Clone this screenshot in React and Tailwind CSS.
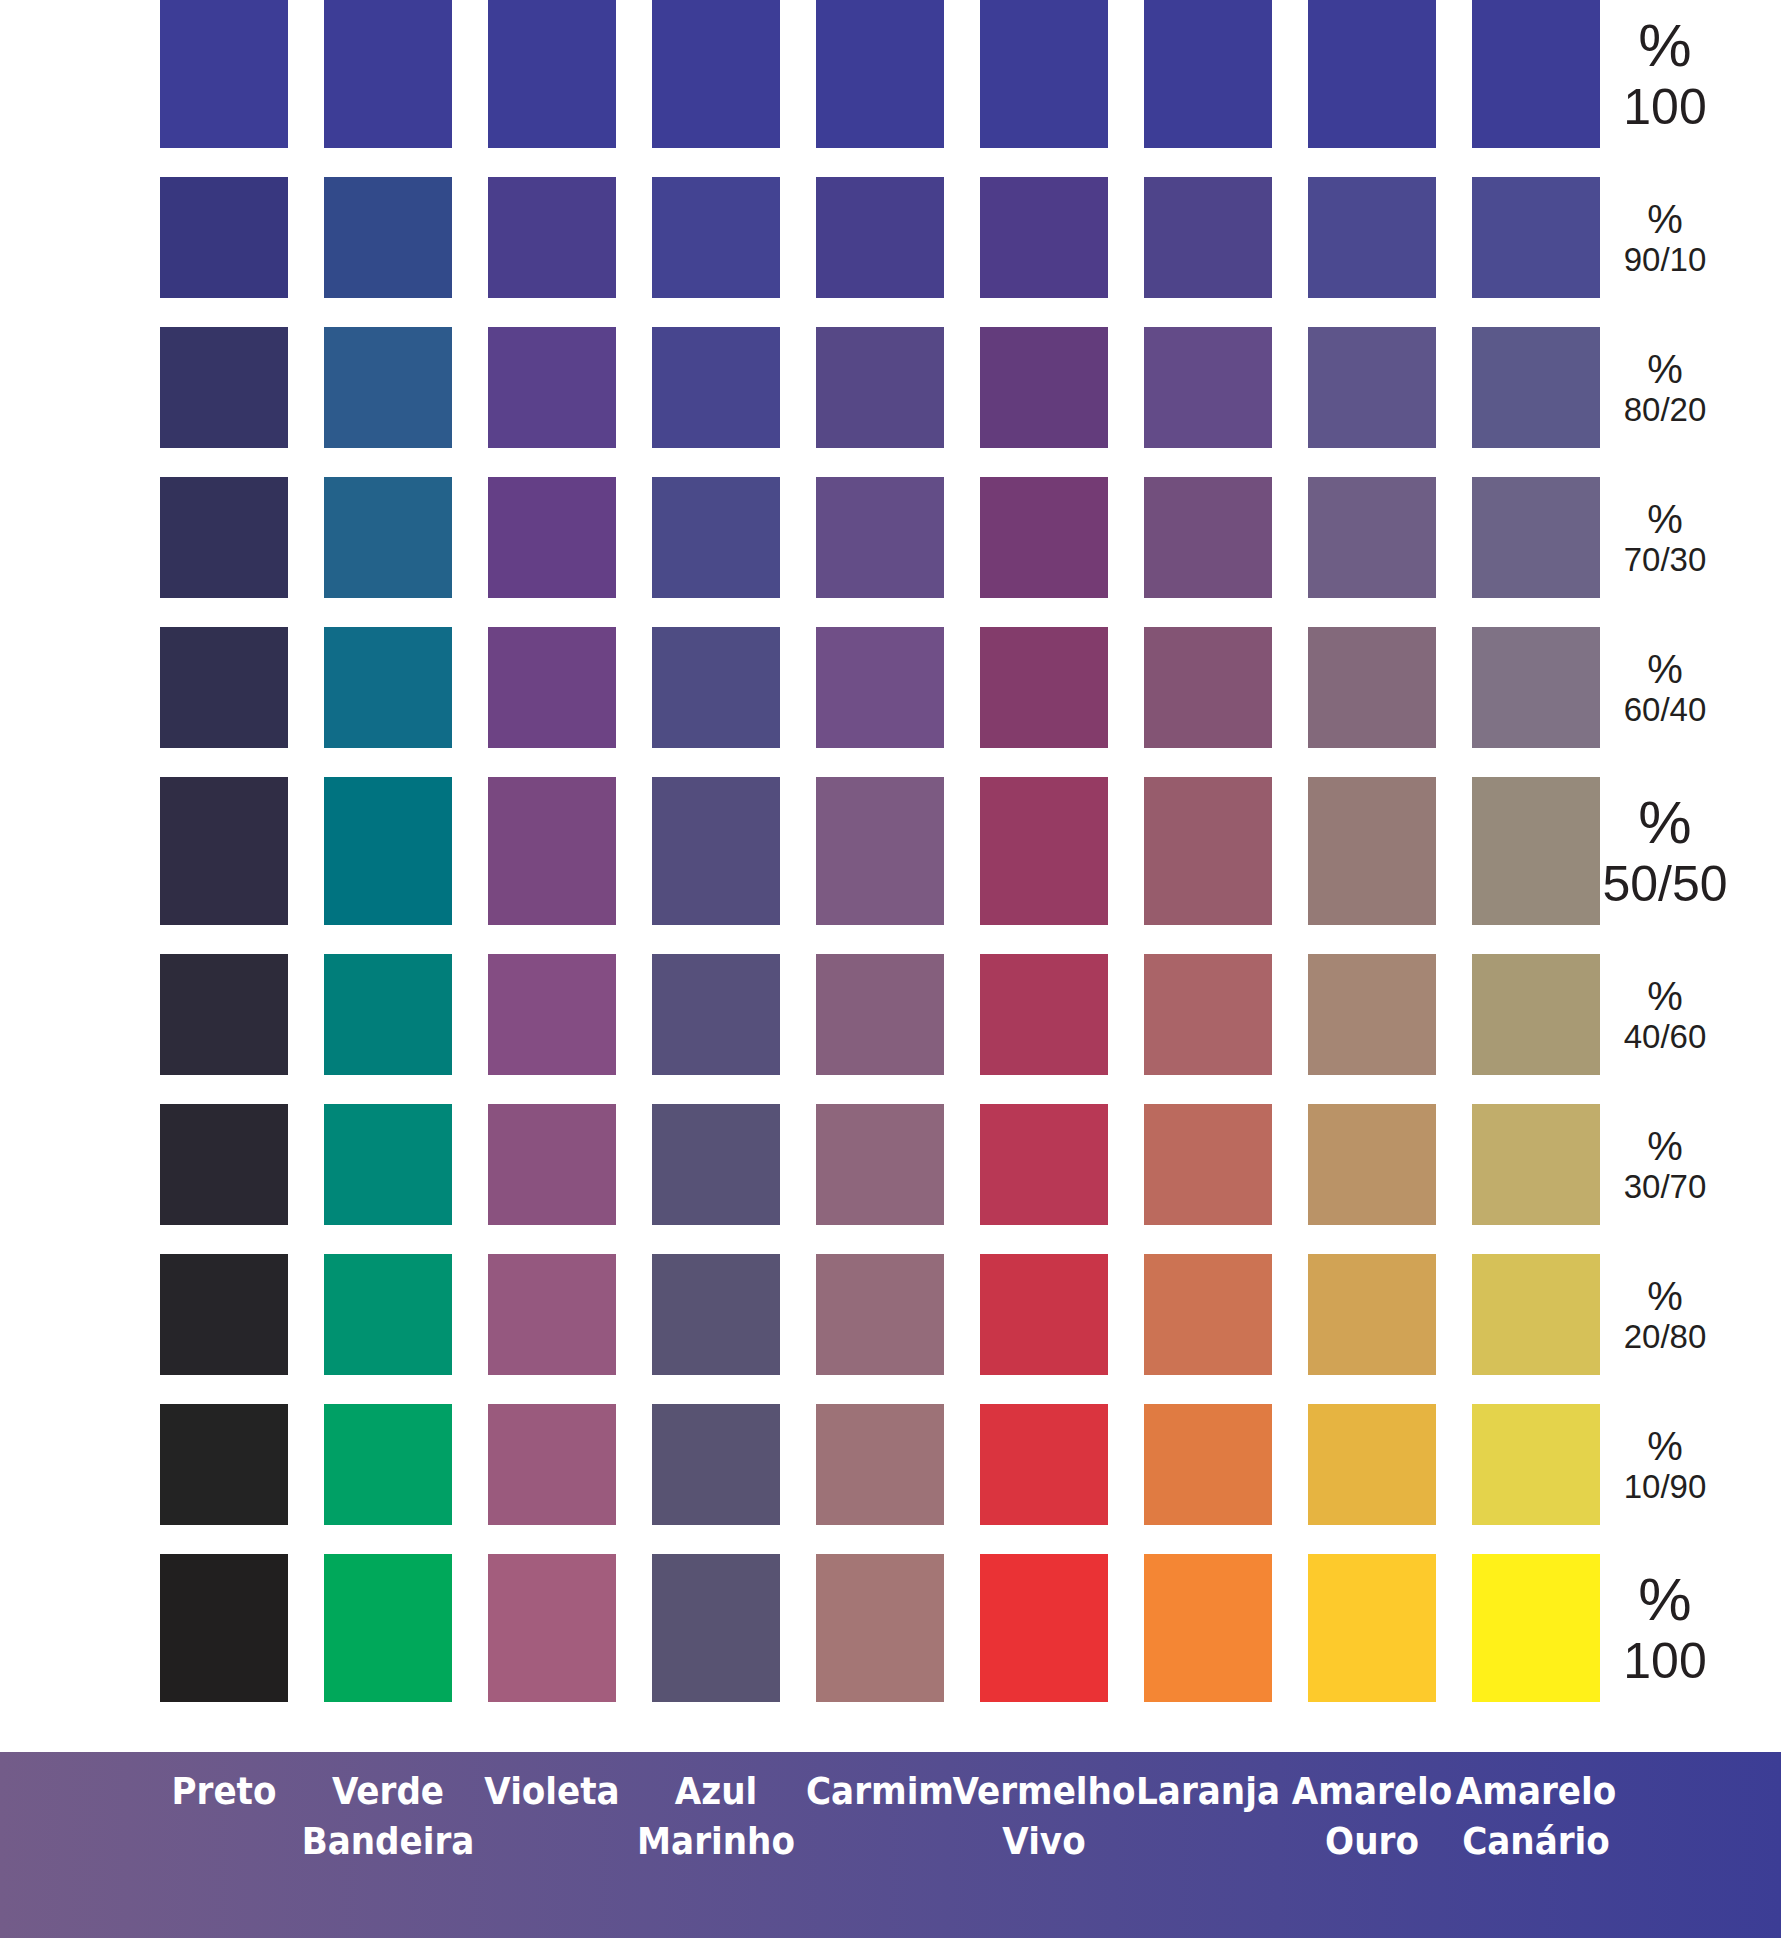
import React from 'react';

const columns = [
  { name: ['Preto'], colors: ['#3d3d96', '#38377f', '#363566', '#33325a', '#313050', '#302d45', '#2d2b3a', '#2a2832', '#262529', '#232323', '#211f1f'] },
  { name: ['Verde', 'Bandeira'], colors: ['#3d3d96', '#324a8a', '#2d5a8c', '#23628a', '#106c88', '#007380', '#017e7a', '#008778', '#009270', '#00a065', '#00a85a'] },
  { name: ['Violeta'], colors: ['#3d3d96', '#4a3e8c', '#5a418b', '#643f86', '#6d4384', '#794880', '#844d83', '#8a527f', '#95587f', '#9a5a7d', '#a35d7d'] },
  { name: ['Azul', 'Marinho'], colors: ['#3d3d96', '#434392', '#47458e', '#4a4a89', '#4e4c83', '#534d7d', '#56507b', '#575276', '#585373', '#585372', '#585372'] },
  { name: ['Carmim'], colors: ['#3d3d96', '#473f8c', '#564886', '#634d87', '#704f87', '#7c5a82', '#855f7d', '#8e667c', '#946b7a', '#9d7277', '#a47675'] },
  { name: ['Vermelho', 'Vivo'], colors: ['#3d3d96', '#4e3c89', '#633c7c', '#743b74', '#833c6b', '#963b63', '#a93a5b', '#b83855', '#c93548', '#da343f', '#ea3235'] },
  { name: ['Laranja'], colors: ['#3d3d96', '#4e448a', '#634b88', '#724f7d', '#835474', '#975c6c', '#aa6468', '#bb6a5e', '#cc7353', '#e07b42', '#f48634'] },
  { name: ['Amarelo', 'Ouro'], colors: ['#3d3d96', '#4b4990', '#5e558a', '#6e5e85', '#83697b', '#957a76', '#a58674', '#ba9367', '#d1a355', '#e6b441', '#fdca2c'] },
  { name: ['Amarelo', 'Canário'], colors: ['#3d3d96', '#4b4b91', '#5b598a', '#6b6387', '#7f7285', '#968a7b', '#a89a74', '#c1ad6b', '#d6c158', '#e4d34b', '#fff119'] },
];

const rows = ['100', '90/10', '80/20', '70/30', '60/40', '50/50', '40/60', '30/70', '20/80', '10/90', '100'];
const big = [0, 5, 10];

export default function App() {
  return (
    <div className="w-[1781px] h-[1938px] bg-white flex flex-col" style={{ fontFamily: '"Liberation Sans", Arial, sans-serif' }}>
      <div className="flex flex-col gap-[29px] pl-[160px] h-[1752px]">
        {rows.map((label, r) => {
          const isBig = big.includes(r);
          return (
            <div key={r} className={`flex items-center gap-[36px] ${isBig ? 'h-[148px]' : 'h-[121px]'}`}>
              {columns.map((c, i) => (
                <div key={i} className="w-[128px] h-full" style={{ backgroundColor: c.colors[r] }} />
              ))}
              <div className="w-[130px] -ml-[36px] flex flex-col items-center text-[#231f20] leading-none">
                <span className={isBig ? 'text-[60px]' : 'text-[40px]'}>%</span>
                <span className={isBig ? 'text-[50px] mt-[6px]' : 'text-[33px] mt-[4px]'}>{label}</span>
              </div>
            </div>
          );
        })}
      </div>
      <div className="h-[186px] bg-gradient-to-r from-[#735c89] to-[#3c3d95] flex pl-[142px] pt-[14px]">
        {columns.map((c, i) => (
          <div key={i} className="w-[164px] flex flex-col items-center text-white font-bold text-[38px] leading-[50px]" style={{ fontFamily: '"DejaVu Sans Condensed", "DejaVu Sans", sans-serif' }}>
            {c.name.map((n) => <span key={n}>{n}</span>)}
          </div>
        ))}
      </div>
    </div>
  );
}
